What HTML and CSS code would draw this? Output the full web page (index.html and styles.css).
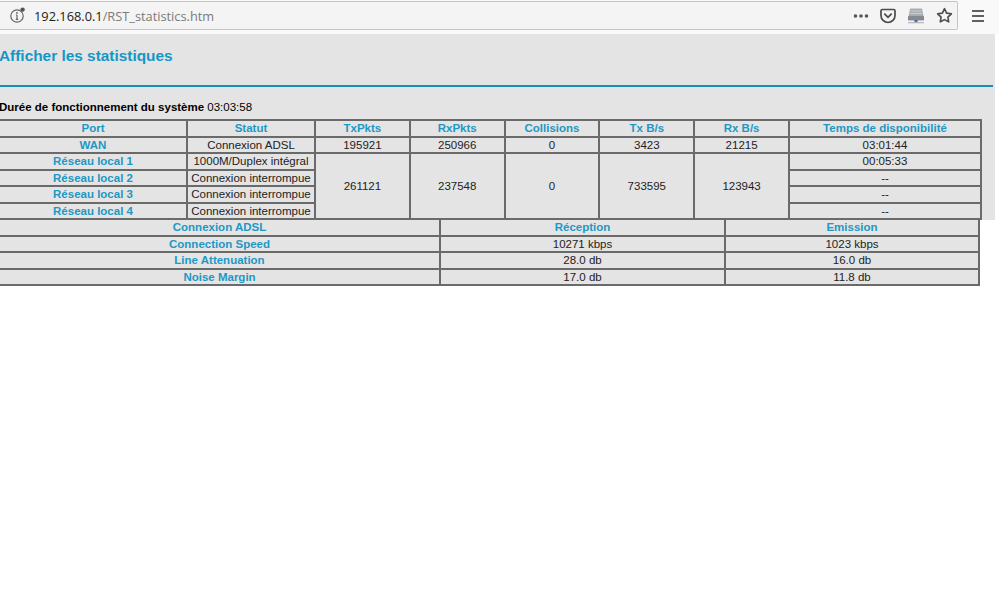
FILE: index.html
```html
<!DOCTYPE html>
<html lang="fr">
<head>
<meta charset="utf-8">
<title>RST_statistics</title>
<link rel="stylesheet" href="styles.css">
</head>
<body>
<header class="toolbar">
  <div class="urlbar">
    <svg class="info" width="18" height="18" viewBox="0 0 18 18" fill="none">
      <circle cx="9" cy="10" r="6.2" stroke="#666" stroke-width="1.2"/>
      <path d="M9 9v4.4M7.8 13.4h2.4M7.9 9h1.1" stroke="#666" stroke-width="1.2"/>
      <circle cx="9" cy="7" r=".9" fill="#666"/>
      <circle cx="14.6" cy="3.6" r="2.2" fill="#555"/>
    </svg>
    <span class="url"><span class="host">192.168.0.1</span>/RST_statistics.htm</span>
    <div class="url-actions">
      <svg width="16" height="6" viewBox="0 0 16 6"><circle cx="2.5" cy="3" r="1.8" fill="#555"/><circle cx="8" cy="3" r="1.8" fill="#555"/><circle cx="13.5" cy="3" r="1.8" fill="#555"/></svg>
      <svg width="16" height="16" viewBox="0 0 16 16" fill="none"><path d="M2.3 1.5h11.4c.7 0 1.3.6 1.3 1.3v4.7c0 3.9-3.2 7-7 7s-7-3.100-7-7V2.800c0-.7.6-1.300 1.300-1.300z" stroke="#4a4a4f" stroke-width="1.700"/><path d="M4.800 6.200 8 9.300l3.200-3.100" stroke="#4a4a4f" stroke-width="1.800" stroke-linecap="round"/></svg>
      <svg width="18" height="18" viewBox="0 0 18 18"><path d="M3 1.500h12l1.500 8h-15z" fill="#a9adb2"/><path d="M3.500 4h11M3 6.500h12" stroke="#c9ccd0" stroke-width="1"/><rect x="1" y="9" width="16" height="4.500" rx=".8" fill="#858a90"/><rect x="7.500" y="13" width="3" height="2.500" fill="#4a68a8"/><rect x="1" y="15" width="16" height="1.300" fill="#b4b8c4"/></svg>
      <svg width="17" height="17" viewBox="0 0 17 17" fill="none"><path d="M8.500 1.700l2.100 4.400 4.800.7-3.500 3.300.8 4.800-4.200-2.300-4.200 2.300.8-4.800-3.500-3.300 4.800-.7z" stroke="#4a4a4f" stroke-width="1.600" stroke-linejoin="round"/></svg>
    </div>
  </div>
  <svg class="menu" width="12" height="12" viewBox="0 0 12 12"><path d="M0 1h12M0 6h12M0 11h12" stroke="#2f2f33" stroke-width="1.600"/></svg>
</header>
<main>
  <section class="panel">
    <h1 class="title">Afficher les statistiques</h1>
    <div class="rule"></div>
    <p class="uptime"><b>Durée de fonctionnement du système</b> 03:03:58</p>
    <table class="grid stats">
      <colgroup>
        <col class="c-port"><col class="c-status"><col class="c-num"><col class="c-num"><col class="c-num"><col class="c-num"><col class="c-num"><col class="c-time">
      </colgroup>
      <tr><th>Port</th><th>Statut</th><th>TxPkts</th><th>RxPkts</th><th>Collisions</th><th>Tx B/s</th><th>Rx B/s</th><th>Temps de disponibilité</th></tr>
      <tr><th>WAN</th><td>Connexion ADSL</td><td>195921</td><td>250966</td><td>0</td><td>3423</td><td>21215</td><td>03:01:44</td></tr>
      <tr><th>Réseau local 1</th><td>1000M/Duplex intégral</td><td rowspan="4">261121</td><td rowspan="4">237548</td><td rowspan="4">0</td><td rowspan="4">733595</td><td rowspan="4">123943</td><td>00:05:33</td></tr>
      <tr><th>Réseau local 2</th><td>Connexion interrompue</td><td>--</td></tr>
      <tr><th>Réseau local 3</th><td>Connexion interrompue</td><td>--</td></tr>
      <tr><th>Réseau local 4</th><td>Connexion interrompue</td><td>--</td></tr>
    </table>
  </section>
  <table class="grid adsl">
    <colgroup><col class="c-a"><col class="c-b"><col class="c-c"></colgroup>
    <tr><th>Connexion ADSL</th><th>Réception</th><th>Emission</th></tr>
    <tr><th>Connection Speed</th><td>10271 kbps</td><td>1023 kbps</td></tr>
    <tr><th>Line Attenuation</th><td>28.0 db</td><td>16.0 db</td></tr>
    <tr><th>Noise Margin</th><td>17.0 db</td><td>11.8 db</td></tr>
  </table>
</main>
</body>
</html>
```
FILE: styles.css
```css
html, body { margin: 0; padding: 0; background: #fff; overflow: hidden; }
body { font-family: "Liberation Sans", Arial, sans-serif; font-size: 11.5px; color: #111; }

.toolbar { height: 34px; box-sizing: border-box; background: #f9f9fa; display: flex; align-items: flex-start; padding-top: 1px; }
.urlbar { width: 958px; height: 29px; box-sizing: border-box; border: 1px solid #c4c4c6; border-left: 0; border-radius: 0 2px 2px 0; background: #f4f4f4; display: flex; align-items: center; padding: 0 5px 0 8px; }
.info { margin-right: 8px; margin-top: -2px; }
.url { font-family: "Open Sans", sans-serif; font-size: 12.8px; color: #7b7b7b; flex: 1; margin-top: 1px; }
.host { color: #222; }
.url-actions { display: flex; align-items: center; gap: 11px; margin-right: -1px; }
.menu { margin: 9px 0 0 14px; }

.panel { width: 995px; height: 186px; background: #e4e4e4; display: flow-root; }
.title { margin: 0 0 0 -1px; padding-top: 14px; height: 23px; font-size: 15.4px; line-height: 16px; font-weight: bold; color: #1497c6; }
.rule { width: 993px; height: 2px; background: #1b8fb4; margin-top: 14px; }
.uptime { margin: 13px 0 0 -1px; font-size: 11.5px; line-height: 14px; height: 19px; color: #000; }

.grid { border-collapse: collapse; table-layout: fixed; background: #e4e4e4; margin-left: -2px; }
.grid th, .grid td { border: 2px solid #6a6a6a; padding: 0; height: 14.55px; line-height: 14px; font-size: 11.5px; text-align: center; white-space: nowrap; overflow: hidden; }
.grid th { color: #1e98c4; font-weight: bold; }
.grid td { color: #222; font-weight: normal; }

.stats { width: 982px; }
.c-port { width: 188px; }
.c-status { width: 128px; }
.c-num { width: 94.8px; }
.c-time { width: 192px; }

.adsl { width: 980px; margin-top: -2px; position: relative; }
.c-a { width: 441px; }
.c-b { width: 285px; }
.c-c { width: 254px; }
```
